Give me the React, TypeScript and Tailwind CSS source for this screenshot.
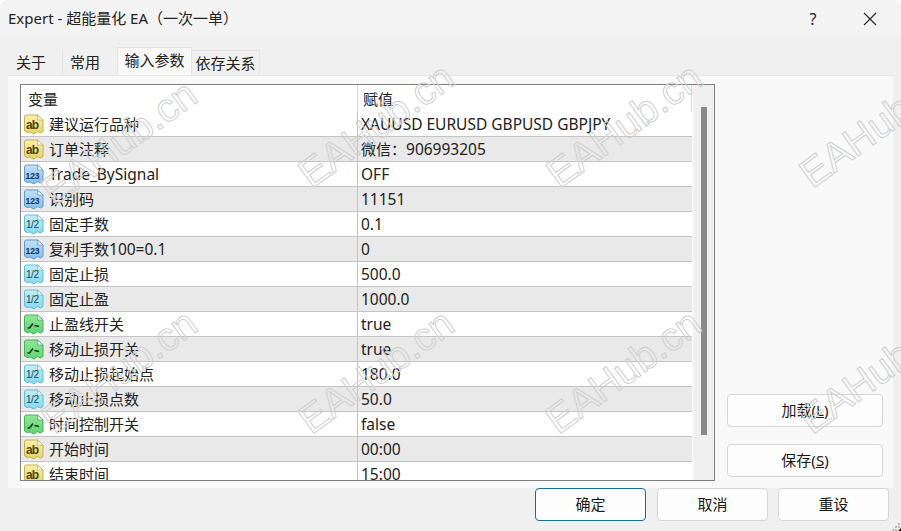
const font = { fontFamily: '"Noto Sans","Noto Sans CJK SC",sans-serif' };

type Kind = "ab" | "123" | "half" | "bool";
const rows: [Kind, string, string][] = [
  ["ab", "建议运行品种", "XAUUSD EURUSD GBPUSD GBPJPY"],
  ["ab", "订单注释", "微信：906993205"],
  ["123", "Trade_BySignal", "OFF"],
  ["123", "识别码", "11151"],
  ["half", "固定手数", "0.1"],
  ["123", "复利手数100=0.1", "0"],
  ["half", "固定止损", "500.0"],
  ["half", "固定止盈", "1000.0"],
  ["bool", "止盈线开关", "true"],
  ["bool", "移动止损开关", "true"],
  ["half", "移动止损起始点", "180.0"],
  ["half", "移动止损点数", "50.0"],
  ["bool", "时间控制开关", "false"],
  ["ab", "开始时间", "00:00"],
  ["ab", "结束时间", "15:00"],
];

const palette: Record<Kind, { top: string; bottom: string; edge: string; ink: string }> = {
  ab: { top: "#fbf0a8", bottom: "#e6d268", edge: "#c4b14e", ink: "#4d4410" },
  "123": { top: "#c4e0f8", bottom: "#86bcec", edge: "#5f9bd0", ink: "#0f3560" },
  half: { top: "#c2eef8", bottom: "#86d8ec", edge: "#62bcd4", ink: "#0f4a60" },
  bool: { top: "#8ee898", bottom: "#62d274", edge: "#46b058", ink: "#0a3c14" },
};

function TypeIcon({ kind }: { kind: Kind }) {
  const c = palette[kind];
  const id = `g-${kind}`;
  return (
    <svg width="21" height="21" viewBox="0 0 21 21" className="shrink-0">
      <defs>
        <linearGradient id={id} x1="0" y1="0" x2="0" y2="1">
          <stop offset="0" stopColor={c.top} />
          <stop offset="1" stopColor={c.bottom} />
        </linearGradient>
      </defs>
      <path
        d="M1.5 3 Q1.5 1 3.5 1 H14.5 L20 6 V17.5 L17.5 19 L14.5 17.5 L11 20 L7 18 L4 18.5 L1.5 17 Z"
        fill={`url(#${id})`}
        stroke={c.edge}
        strokeWidth="1"
      />
      <path d="M14.5 1 V6 H20 Z" fill="#ffffff" stroke={c.edge} strokeWidth="0.8" />
      {kind === "ab" && (
        <text x="3" y="14.5" fontSize="12" fontWeight="700" fill={c.ink} fontFamily="Liberation Sans" textLength="13">ab</text>
      )}
      {kind === "123" && (
        <text x="2.5" y="14.5" fontSize="8.5" fontWeight="700" fill={c.ink} fontFamily="Liberation Sans" textLength="14">123</text>
      )}
      {kind === "half" && (
        <text x="3" y="14" fontSize="10" fontWeight="400" fill={c.ink} fontFamily="Liberation Sans" textLength="13">1/2</text>
      )}
      {kind === "bool" && (
        <path d="M4.5 14 L6.5 14 L10 9.5 M11.5 11.5 L16 12.5" fill="none" stroke={c.ink} strokeWidth="1.6" />
      )}
    </svg>
  );
}

/* Latin runs sit a touch larger than CJK in the reference. */
function Mixed({ text }: { text: string }) {
  const parts = text.split(/([\x20-\x7e]+)/).filter(Boolean);
  return (
    <span className="whitespace-pre">
      {parts.map((p, i) =>
        /^[\x20-\x7e]/.test(p) ? (
          <span key={i} className="text-[15.5px]">{p}</span>
        ) : (
          <span key={i}>{p}</span>
        ),
      )}
    </span>
  );
}

function Btn({ children, primary, className }: { children: React.ReactNode; primary?: boolean; className: string }) {
  return (
    <div
      className={`flex items-center justify-center rounded-[4px] border bg-[#fdfdfd] text-[15px] text-[#1a1a1a] ${
        primary ? "border-[#0f6f9e]" : "border-[#d6d6d6]"
      } ${className}`}
    >
      {children}
    </div>
  );
}

const marks = [
  [119, 142],
  [376, 125],
  [624, 125],
  [877, 125],
  [119, 371],
  [376, 371],
  [623, 371],
  [877, 371],
];

export default function App() {
  return (
    <div style={font} className="relative flex h-[531px] w-[901px] flex-col overflow-hidden rounded-t-lg bg-[#f0f0f0] text-[15px] text-[#222222]">
      <div className="flex h-[37px] items-center bg-[#f3f3f3] pl-2">
        <span className="text-[15px]">Expert - 超能量化 EA（一次一单）</span>
        <span className="ml-auto w-[68px] text-center text-[16px]">?</span>
        <span className="mr-[8px] flex w-[46px] justify-center">
          <svg width="14" height="14" viewBox="0 0 14 14">
            <path d="M1 1 L13 13 M13 1 L1 13" stroke="#222" strokeWidth="1.1" />
          </svg>
        </span>
      </div>

      <div className="flex h-[38px] items-end pl-[10px] text-[15px]">
        <div className="flex h-[25px] w-[53px] items-center border-r border-[#e4e4e4] bg-[#f0f0f0] pl-[6px]">关于</div>
        <div className="flex h-[25px] w-[53px] items-center bg-[#f0f0f0] pl-[7px]">常用</div>
        <div className="ml-px flex h-[28px] w-[75px] items-center justify-center border-x border-t border-[#e4e4e4] bg-[#f9f9f9] pb-[2px]">输入参数</div>
        <div className="flex h-[25px] w-[68px] items-center justify-center border-r border-t border-[#e4e4e4]">依存关系</div>
      </div>

      <div className="mx-2 flex h-[413px] border-t border-[#e8e8e8] bg-[#f9f9f9] pl-3 pt-2">
        <div className="flex h-[397px] w-[695px] border border-[#808080] bg-white">
          <div className="flex w-[671px] flex-col overflow-hidden">
            <div className="flex h-[27px] shrink-0 items-center border-r border-[#d8d8d8]">
              <div className="w-[336px] pl-[7px] pt-[2px]">变量</div>
              <div className="h-full border-l border-[#d8d8d8] pl-[5px] pt-[3px]">赋值</div>
            </div>
            {rows.map(([kind, name, value], i) => (
              <div
                key={name}
                className={`flex h-[25px] shrink-0 border-b border-[#c4c4c4] ${i % 2 ? "bg-[#e9e9e9]" : "bg-white"}`}
              >
                <div className="flex w-[336px] items-center pl-[2px]">
                  <TypeIcon kind={kind} />
                  <span className={`ml-[5px] ${/[\x20-\x7e]/.test(name) ? "pt-[2px]" : ""}`}><Mixed text={name} /></span>
                </div>
                <div className="flex items-center border-l border-[#c4c4c4] pl-[3px] pt-[2px]"><Mixed text={value} /></div>
              </div>
            ))}
          </div>
          <div className="ml-px flex-1 bg-[#f0f0f0] pl-2 pt-[22px]">
            <div className="h-[328px] w-[6px] bg-[#8a8a8a]" />
          </div>
        </div>
        <div className="ml-3 flex w-[156px] flex-col gap-[17px] pt-[310px]">
          <Btn className="h-[33px] w-full">加载(<span className="underline">L</span>)</Btn>
          <Btn className="h-[33px] w-full">保存(<span className="underline">S</span>)</Btn>
        </div>
      </div>

      <div className="flex justify-end gap-[10px] pr-3">
        <Btn primary className="mr-px h-[33px] w-[111px]">确定</Btn>
        <Btn className="h-[33px] w-[111px]">取消</Btn>
        <Btn className="h-[33px] w-[111px]">重设</Btn>
      </div>

      {marks.map(([x, y], i) => (
        <div
          key={i}
          style={{ left: x, top: y }}
          className="pointer-events-none absolute -translate-x-1/2 -translate-y-1/2 -rotate-[36deg] whitespace-nowrap text-[40px] leading-none text-transparent [-webkit-text-stroke:1px_#cfcfcf] [font-family:'Liberation_Sans',sans-serif]"
        >
          EAHub.cn
        </div>
      ))}

      <svg width="11" height="10" viewBox="0 0 11 10" className="absolute bottom-0 right-0">
        <path d="M2 8h2v2H2zM5 5h2v2H5zM5 8h2v2H5zM8 2h2v2H8zM8 5h2v2H8z" fill="#b8b8b8" />
        <path d="M8 10 L11 7 V10 Z" fill="#111" />
      </svg>
    </div>
  );
}
